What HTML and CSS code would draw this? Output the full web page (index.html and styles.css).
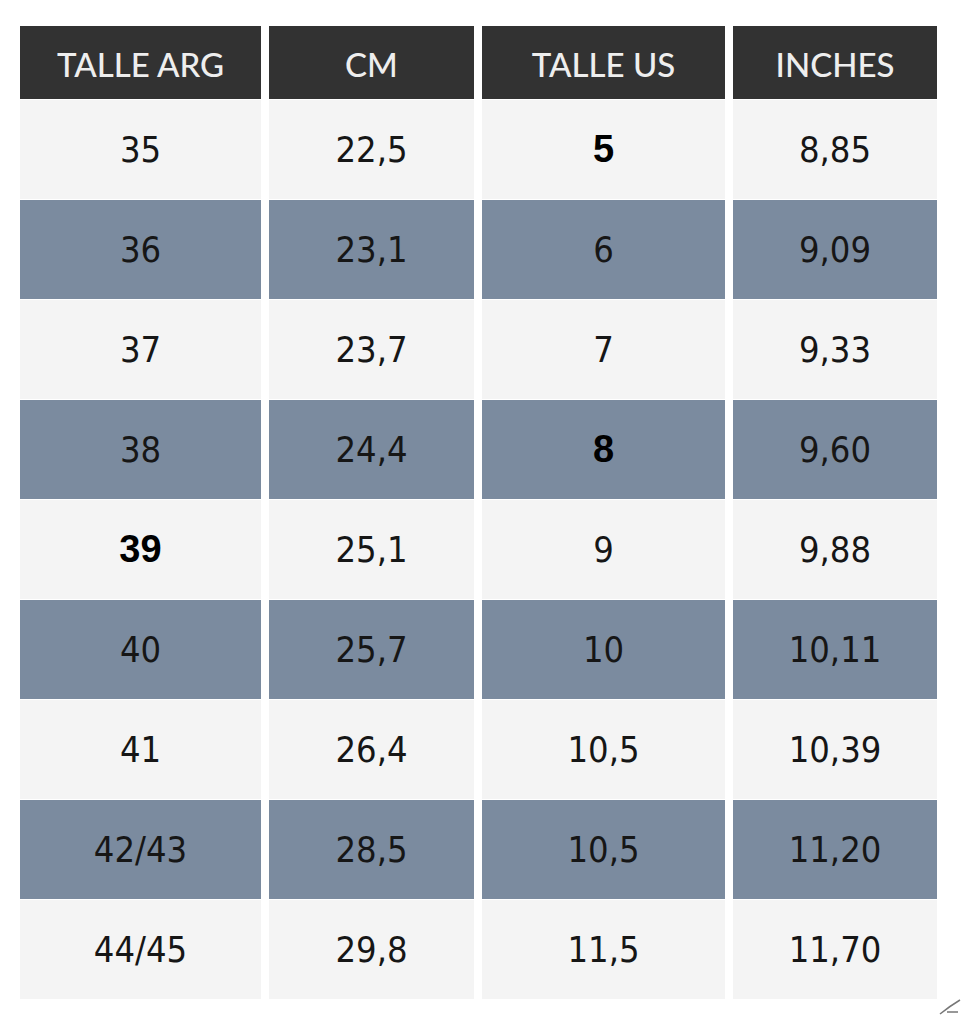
FILE: index.html
```html
<!DOCTYPE html>
<html lang="es">
<head>
<meta charset="utf-8">
<title>Tabla de talles</title>
<link rel="stylesheet" href="styles.css">
</head>
<body>
<div class="chart">
  <div class="cell head">TALLE ARG</div>
  <div class="cell head">CM</div>
  <div class="cell head">TALLE US</div>
  <div class="cell head">INCHES</div>

  <div class="cell light">35</div>
  <div class="cell light">22,5</div>
  <div class="cell light"><b class="strong">5</b></div>
  <div class="cell light">8,85</div>

  <div class="cell blue">36</div>
  <div class="cell blue">23,1</div>
  <div class="cell blue">6</div>
  <div class="cell blue">9,09</div>

  <div class="cell light">37</div>
  <div class="cell light">23,7</div>
  <div class="cell light">7</div>
  <div class="cell light">9,33</div>

  <div class="cell blue">38</div>
  <div class="cell blue">24,4</div>
  <div class="cell blue"><b class="strong">8</b></div>
  <div class="cell blue">9,60</div>

  <div class="cell light"><b class="strong">39</b></div>
  <div class="cell light">25,1</div>
  <div class="cell light">9</div>
  <div class="cell light">9,88</div>

  <div class="cell blue">40</div>
  <div class="cell blue">25,7</div>
  <div class="cell blue">10</div>
  <div class="cell blue">10,11</div>

  <div class="cell light">41</div>
  <div class="cell light">26,4</div>
  <div class="cell light">10,5</div>
  <div class="cell light">10,39</div>

  <div class="cell blue">42/43</div>
  <div class="cell blue">28,5</div>
  <div class="cell blue">10,5</div>
  <div class="cell blue">11,20</div>

  <div class="cell light">44/45</div>
  <div class="cell light">29,8</div>
  <div class="cell light">11,5</div>
  <div class="cell light">11,70</div>
</div>
<svg class="corner" width="24" height="20" viewBox="0 0 24 20" aria-hidden="true">
  <path d="M2 18 Q12 10 22 4 M9 16 L20 16" stroke="#777" stroke-width="1.5" fill="none"/>
</svg>
</body>
</html>
```

FILE: styles.css
```css
html, body {
  margin: 0;
  background: #ffffff;
}

body {
  padding: 26px 0 0 20px;
  position: relative;
  height: 1024px;
  box-sizing: border-box;
  overflow: hidden;
}

.chart {
  display: grid;
  grid-template-columns: 241px 205px 243px 204px;
  grid-template-rows: 73px repeat(9, 99px);
  column-gap: 8px;
  row-gap: 1px;
  font-family: "DejaVu Sans Condensed", "DejaVu Sans", Roboto, sans-serif;
  font-stretch: condensed;
}

.cell {
  display: flex;
  align-items: center;
  justify-content: center;
  font-size: 36px;
  color: #161616;
}

.head {
  background: #323232;
  color: #eeeeee;
  font-family: Lato, "Open Sans", sans-serif;
  font-stretch: normal;
  font-size: 33px;
  font-weight: 500;
  padding-top: 2px;
  box-sizing: border-box;
}

.light {
  background: #f4f4f4;
}

.blue {
  background: #7b8b9f;
}

.strong {
  font-family: "Liberation Sans", Arial, sans-serif;
  font-stretch: normal;
  font-weight: 700;
  font-size: 38px;
  color: #000000;
}

.corner {
  position: absolute;
  right: 0;
  top: 996px;
}
```
